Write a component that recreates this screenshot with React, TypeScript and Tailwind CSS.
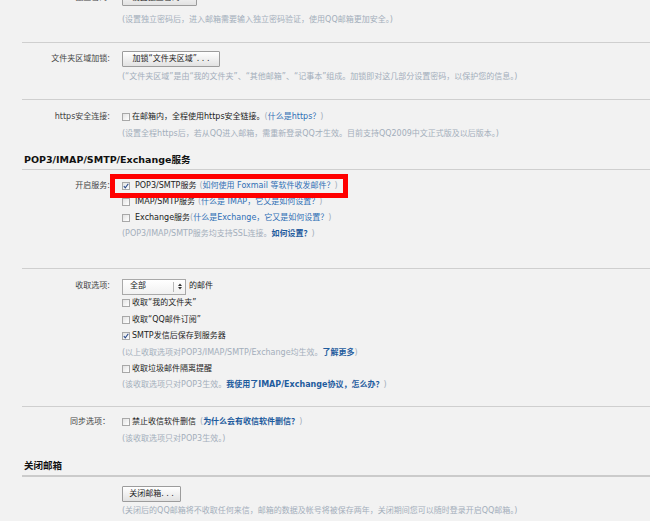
import React from 'react'

const Hint = ({ children, className = '' }: { children: React.ReactNode; className?: string }) => (
  <div className={`leading-[16px] text-[#a3aebb] ${className}`}>{children}</div>
)

const A = ({ children, bold = false }: { children: React.ReactNode; bold?: boolean }) => (
  <span className={bold ? 'font-bold text-[#1f5c9e]' : 'text-[#2f6fb5]'}>{children}</span>
)

const Btn = ({ children, className = '' }: { children: React.ReactNode; className?: string }) => (
  <div
    className={`h-[16px] flex items-center justify-center border border-[#9c9c9c] rounded-[1px] bg-linear-to-b from-white to-[#e2e2e2] text-[#222] ${className}`}
  >
    {children}
  </div>
)

const Check = ({ checked = false }: { checked?: boolean }) => (
  <span className="w-[8px] h-[8px] shrink-0 border border-[#a8a8a8] bg-linear-to-br from-[#e3e3e3] to-white flex items-center justify-center">
    {checked && (
      <svg width="6" height="6" viewBox="0 0 6 6">
        <path d="M0.8 3.2 L2.3 4.9 L5.3 0.8" fill="none" stroke="#2a4a8c" strokeWidth="1.1" />
      </svg>
    )}
  </span>
)

const Row = ({
  label,
  children,
  className = '',
}: {
  label?: string
  children: React.ReactNode
  className?: string
}) => (
  <div className={`flex items-center ${className}`}>
    <div className="w-[88px] shrink-0 text-right text-[#444]">{label}</div>
    <div className="ml-[12px] flex items-center">{children}</div>
  </div>
)

const Indent = ({ children, className = '' }: { children: React.ReactNode; className?: string }) => (
  <div className={`pl-[100px] ${className}`}>{children}</div>
)

export default function App() {
  return (
    <div className="w-[650px] h-[521px] overflow-hidden bg-[#f2f2f2] relative text-[8px] text-[#222] font-['DejaVu_Sans','Noto_Sans_CJK_SC',sans-serif]">
      <div className="ml-[22px]">
        {/* 独立密码 */}
        <div className="-mt-[10px] pb-[14px] border-b border-[#cfcfcf]">
          <Row label="独立密码:" className="h-[16px]">
            <Btn className="w-[75px]">设置独立密码...</Btn>
          </Row>
          <Indent className="mt-[6px]">
            <Hint>(设置独立密码后，进入邮箱需要输入独立密码验证，使用QQ邮箱更加安全。)</Hint>
          </Indent>
        </div>

        {/* 文件夹区域加锁 */}
        <div className="pt-[8px] pb-[14px] border-b border-[#cfcfcf]">
          <Row label="文件夹区域加锁:" className="h-[16px]">
            <Btn className="w-[98px]">加锁“文件夹区域”. . .</Btn>
          </Row>
          <Indent className="mt-[2px]">
            <Hint>(“文件夹区域”是由“我的文件夹”、“其他邮箱”、“记事本”组成。加锁即对这几部分设置密码，以保护您的信息。)</Hint>
          </Indent>
        </div>

        {/* https */}
        <div className="pt-[9px]">
          <Row label="https安全连接:" className="h-[16px]">
            <Check />
            <span className="ml-[2px]">在邮箱内，全程使用https安全链接。</span>
            <span className="text-[#a3aebb]">(</span>
            <A>什么是https？</A>
            <span className="text-[#a3aebb]">)</span>
          </Row>
          <Indent className="mt-[1px]">
            <Hint>(设置全程https后，若从QQ进入邮箱，需重新登录QQ才生效。目前支持QQ2009中文正式版及以后版本。)</Hint>
          </Indent>
        </div>

        <div className="pt-[10px] pb-[1px] pl-[2px] border-b border-[#cfcfcf] leading-[16px] text-[9.5px] font-bold text-[#111]">
          POP3/IMAP/SMTP/Exchange服务
        </div>

        {/* 开启服务 */}
        <div className="pt-[8px] pb-[26px] border-b border-[#cfcfcf] leading-[16px]">
          <Row label="开启服务:" className="h-[16px]">
            <Check checked />
            <span className="ml-[5px]">POP3/SMTP服务</span>
            <span className="text-[#a3aebb] ml-[3px]">(</span>
            <A>如何使用 Foxmail 等软件收发邮件？</A>
            <span className="text-[#a3aebb]">)</span>
          </Row>
          <Row className="h-[16px]">
            <Check />
            <span className="ml-[5px]">IMAP/SMTP服务</span>
            <span className="text-[#a3aebb] ml-[3px]">(</span>
            <A>什么是 IMAP，它又是如何设置？</A>
            <span className="text-[#a3aebb]">)</span>
          </Row>
          <Row className="h-[16px]">
            <Check />
            <span className="ml-[5px]">Exchange服务</span>
            <span className="text-[#a3aebb]">(</span>
            <A>什么是Exchange，它又是如何设置？</A>
            <span className="text-[#a3aebb]">)</span>
          </Row>
          <Indent>
            <Hint>
              (POP3/IMAP/SMTP服务均支持SSL连接。<A bold>如何设置？</A>)
            </Hint>
          </Indent>
        </div>

        {/* 收取选项 */}
        <div className="pt-[9px] pb-[13px] border-b border-[#cfcfcf] leading-[16.6px]">
          <Row label="收取选项:" className="h-[17px]">
            <div className="w-[64px] h-[16px] flex items-center border border-[#a9a9a9] bg-linear-to-b from-white to-[#f1f1f1]">
              <span className="pl-[7px] w-[50px]">全部</span>
              <span className="w-px h-[10px] bg-[#b8b8b8]" />
              <svg width="4" height="7" viewBox="0 0 4 7" className="ml-[4px]">
                <path d="M0 3 L2 0.5 L4 3 Z M0 4 L2 6.5 L4 4 Z" fill="#333" />
              </svg>
            </div>
            <span className="ml-[3px]">的邮件</span>
          </Row>
          <Indent>
            <div className="flex items-center h-[16.6px]">
              <Check />
              <span className="ml-[2px]">收取“我的文件夹”</span>
            </div>
            <div className="flex items-center h-[16.6px]">
              <Check />
              <span className="ml-[2px]">收取“QQ邮件订阅”</span>
            </div>
            <div className="flex items-center h-[16.6px]">
              <Check checked />
              <span className="ml-[2px]">SMTP发信后保存到服务器</span>
            </div>
            <Hint className="leading-[16.6px]">
              (以上收取选项对POP3/IMAP/SMTP/Exchange均生效。<A bold>了解更多</A>)
            </Hint>
            <div className="flex items-center h-[16.6px]">
              <Check />
              <span className="ml-[2px]">收取垃圾邮件隔离提醒</span>
            </div>
            <Hint className="leading-[16.6px]">
              (该收取选项只对POP3生效。<A bold>我使用了IMAP/Exchange协议，怎么办？</A>)
            </Hint>
          </Indent>
        </div>

        {/* 同步选项 */}
        <div className="pt-[7px] leading-[16px]">
          <Row label="同步选项：" className="h-[16px]">
            <Check />
            <span className="ml-[2px]">禁止收信软件删信</span>
            <span className="text-[#a3aebb] ml-[4px]">(</span>
            <A bold>为什么会有收信软件删信？</A>
            <span className="text-[#a3aebb]">)</span>
          </Row>
          <Indent className="mt-[1px]">
            <Hint>(该收取选项只对POP3生效。)</Hint>
          </Indent>
        </div>

        <div className="mt-[11px] pb-[1px] pl-[2px] border-b-2 border-[#cbcbcb] leading-[16px] text-[9.5px] font-bold text-[#111]">
          关闭邮箱
        </div>

        {/* 关闭邮箱 */}
        <div className="pt-[9px]">
          <Row className="h-[16px]">
            <Btn className="w-[59px]">关闭邮箱. . .</Btn>
          </Row>
          <Indent className="mt-[1px]">
            <Hint>(关闭后的QQ邮箱将不收取任何来信，邮箱的数据及帐号将被保存两年，关闭期间您可以随时登录开启QQ邮箱。)</Hint>
          </Indent>
        </div>
      </div>

      {/* annotation box */}
      <div className="absolute left-[110px] top-[174px] w-[238px] h-[24px] border-[5px] border-[#ff0000]" />
    </div>
  )
}
